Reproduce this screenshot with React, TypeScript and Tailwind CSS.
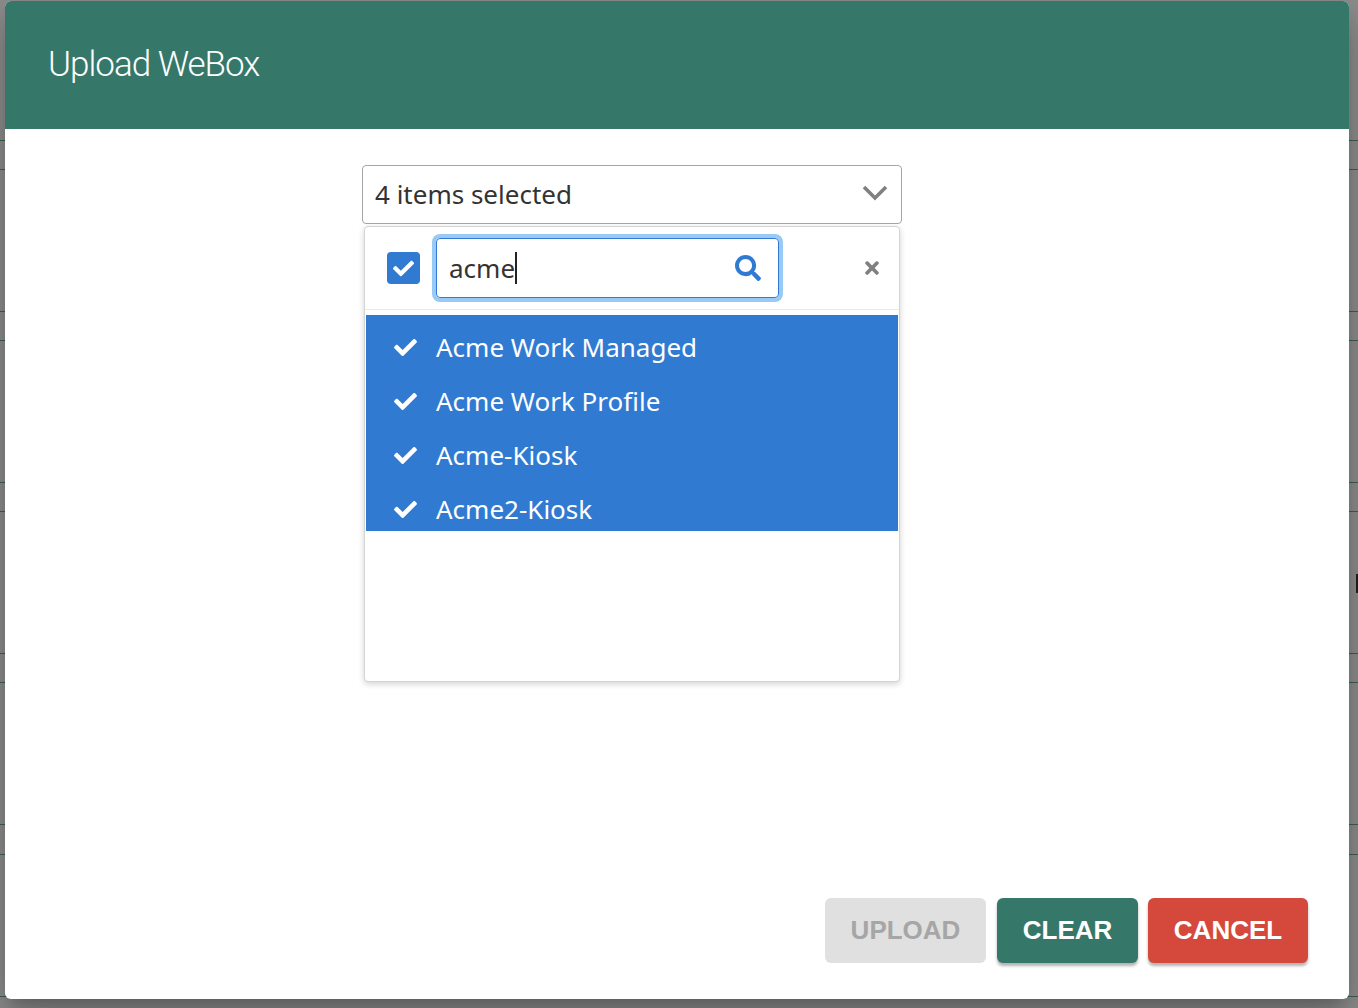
import React from 'react';
import { FaCheck, FaSearch, FaTimes } from 'react-icons/fa';

const options = ['Acme Work Managed', 'Acme Work Profile', 'Acme-Kiosk', 'Acme2-Kiosk'];
const noto = { fontFamily: '"Noto Sans", sans-serif' };

export default function App() {
    // table rows of the page behind the backdrop
    const rowLines = [140, 169, 311, 340, 482, 511, 653, 682, 824, 854, 996];

    return (
        <div className="relative h-[1008px] w-[1358px] overflow-hidden bg-[#8f8f8f] pt-px pl-[5px]">
            {rowLines.map((top) => (
                <div key={top} className="absolute left-0 h-px w-full bg-[#3f5f55]" style={{ top }} />
            ))}
            <div className="absolute top-[574px] right-0 h-[19px] w-[2px] bg-[#222]" />

            <div className="relative flex h-[998px] w-[1344px] flex-col overflow-hidden rounded-[6px] bg-white shadow-[0_11px_15px_-7px_rgba(0,0,0,0.2),0_24px_38px_3px_rgba(0,0,0,0.14),0_9px_46px_8px_rgba(0,0,0,0.12)]">
                <header className="flex h-[128px] shrink-0 items-center bg-[#35786a] pl-[43px]">
                    <h1 className="font-['Roboto',sans-serif] text-[35px] font-light tracking-[-1px] text-white">Upload WeBox</h1>
                </header>

                <div className="flex flex-1 flex-col pt-[36px] pl-[357px]" style={noto}>
                    <div className="flex h-[59px] w-[540px] items-center justify-between rounded-[4px] border border-[#a6a6a6] pr-[13px] pl-[12px]">
                        <span className="text-[26px] text-[#333]">4 items selected</span>
                        <svg width="26" height="16" viewBox="0 0 26 16" className="mb-[3px]">
                            <polyline points="2,2 13,13 24,2" fill="none" stroke="#808080" strokeWidth="3.6" />
                        </svg>
                    </div>

                    <div className="mt-[2px] ml-[2px] h-[456px] w-[536px] rounded-[4px] border border-[#d4d4d4] bg-white shadow-[0_2px_6px_rgba(0,0,0,0.18)]">
                        <div className="flex h-[83px] items-center border-b border-[#e8e8e8] pl-[22px]">
                            <span className="flex h-[32px] w-[33px] items-center justify-center rounded-[4px] bg-[#317ad2]">
                                <FaCheck className="text-white" size={21} />
                            </span>
                            <div className="ml-[16px] flex h-[60px] w-[343px] items-center justify-between rounded-[4px] border border-[#317ad2] pr-[17px] pl-[12px] shadow-[0_0_0_4px_#99c9f7]">
                                <span className="flex items-center text-[26px] text-[#333]">
                                    acme
                                    <span className="h-[32px] w-[2px] bg-[#222]" />
                                </span>
                                <FaSearch className="text-[#317ad2]" size={26} />
                            </div>
                            <FaTimes className="ml-[83px] text-[#808080]" size={20} />
                        </div>

                        <ul className="mt-[5px] ml-px h-[216px] w-[532px] overflow-hidden bg-[#317ad2] pt-[5px] text-white">
                            {options.map((name) => (
                                <li key={name} className="flex h-[54px] items-center pl-[28px] text-[26px]">
                                    <FaCheck size={23} />
                                    <span className="ml-[19px]">{name}</span>
                                </li>
                            ))}
                        </ul>
                    </div>
                </div>

                <footer className="flex justify-end gap-[10px] pr-[41px] pb-[36px] font-['Liberation_Sans',sans-serif] text-[26px] font-bold">
                    <button className="mr-px h-[65px] w-[161px] rounded-[6px] bg-[#e0e0e0] text-[#a6a6a6]">UPLOAD</button>
                    <button className="h-[65px] w-[141px] rounded-[6px] bg-[#35786a] text-white shadow-[0_3px_3px_rgba(0,0,0,0.3)]">CLEAR</button>
                    <button className="h-[65px] w-[160px] rounded-[6px] bg-[#d5493d] text-white shadow-[0_3px_3px_rgba(0,0,0,0.3)]">CANCEL</button>
                </footer>
            </div>
        </div>
    );
}
